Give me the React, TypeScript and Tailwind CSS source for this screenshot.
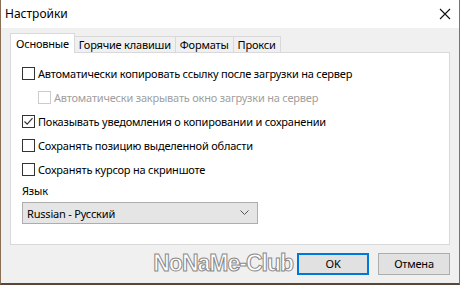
import { useState } from 'react';

function Box({ checked, disabled }: { checked?: boolean; disabled?: boolean }) {
    return (
        <span
            className={`w-[13px] h-[13px] shrink-0 border bg-white flex items-center justify-center ${disabled ? 'border-[#cccccc]' : 'border-[#333333]'}`}
        >
            {checked && (
                <svg width="11" height="11" viewBox="0 0 11 11">
                    <path d="M1.5 5.5 L4.2 8.2 L9.5 2.2" fill="none" stroke="#333" strokeWidth="1.2" />
                </svg>
            )}
        </span>
    );
}

function Check({ label, checked, disabled, indent }: { label: string; checked?: boolean; disabled?: boolean; indent?: boolean }) {
    return (
        <div className={`flex items-center gap-[3px] h-[24px] ${indent ? 'pl-[16px]' : ''}`}>
            <Box checked={checked} disabled={disabled} />
            <span className={disabled ? 'text-[#a0a0a0]' : 'text-black'}>{label}</span>
        </div>
    );
}

export default function App() {
    const [tab] = useState(0);
    const tabs = ['Основные', 'Горячие клавиши', 'Форматы', 'Прокси'];

    return (
        <div className="w-[460px] h-[285px] bg-[#f0f0f0] text-[11px] tracking-[-0.2px] leading-none flex flex-col border-x border-[#8a6e55] border-b-2 border-b-[#5a4638] overflow-hidden" style={{ fontFamily: '"Noto Sans", sans-serif' }}>
            {/* title bar */}
            <div className="h-[28px] bg-white flex items-center justify-between pl-[4px] pr-[8px] shrink-0">
                <span className="text-[12px] tracking-normal text-black">Настройки</span>
                <svg width="12" height="12" viewBox="0 0 12 12">
                    <path d="M1 1 L11 11 M11 1 L1 11" stroke="#111" strokeWidth="1.1" />
                </svg>
            </div>

            <div className="px-[9px] pt-[5px]">
                {/* tabs */}
                <div className="flex items-end h-[19px] relative z-10">
                    {tabs.map((t, i) =>
                        i === tab ? (
                            <div key={t} className="h-[20px] -mb-px px-[5px] bg-white border border-b-0 border-[#d9d9d9] flex items-center">
                                {t}
                            </div>
                        ) : (
                            <div key={t} className="h-[16px] px-[4px] bg-[#f0f0f0] border border-l-0 border-b-0 border-[#d9d9d9] flex items-center">
                                {t}
                            </div>
                        )
                    )}
                </div>

                {/* panel */}
                <div className="h-[193px] bg-white border border-[#d9d9d9] px-[11px] pt-[8px]">
                    <Check label="Автоматически копировать ссылку после загрузки на сервер" />
                    <Check label="Автоматически закрывать окно загрузки на сервер" disabled indent />
                    <Check label="Показывать уведомления о копировании и сохранении" checked />
                    <Check label="Сохранять позицию выделенной области" />
                    <Check label="Сохранять курсор на скриншоте" />
                    <div className="mt-[4px] mb-[6px]">Язык</div>
                    <div className="w-[236px] h-[22px] bg-[#e5e5e5] border border-[#adadad] flex items-center justify-between pl-[4px] pr-[8px]">
                        <span>Russian - Русский</span>
                        <svg width="9" height="6" viewBox="0 0 9 6">
                            <path d="M0.5 0.5 L4.5 4.5 L8.5 0.5" fill="none" stroke="#555" strokeWidth="1" />
                        </svg>
                    </div>
                </div>
            </div>

            {/* footer */}
            <div className="flex items-center justify-end gap-[9px] pr-[9px] pt-[7px]">
                <span className="-mr-[5px] text-[23px] font-bold tracking-[-1px] text-white [-webkit-text-stroke:1px_#8a8a8a]" style={{ fontFamily: '"Liberation Sans", sans-serif' }}>
                    NoNaMe-Club
                </span>
                <button className="w-[72px] h-[22px] bg-[#e1e1e1] border-2 border-[#0078d7] flex items-center justify-center">OK</button>
                <button className="w-[72px] h-[22px] bg-[#e1e1e1] border border-[#adadad] flex items-center justify-center">Отмена</button>
            </div>
        </div>
    );
}
